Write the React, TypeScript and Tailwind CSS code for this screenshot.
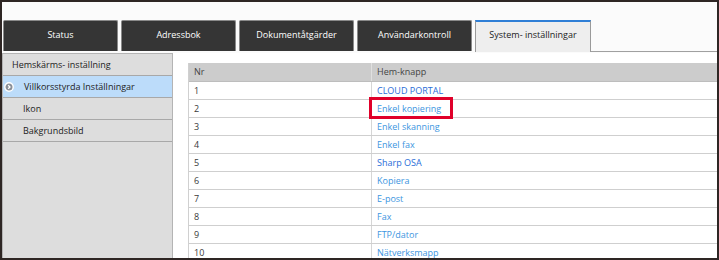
import React from "react";

const tabs = ["Status", "Adressbok", "Dokumentåtgärder", "Användarkontroll"];

const rows: { nr: string; name: string; dark?: boolean; mark?: boolean }[] = [
  { nr: "1", name: "CLOUD PORTAL", dark: true },
  { nr: "2", name: "Enkel kopiering", mark: true },
  { nr: "3", name: "Enkel skanning" },
  { nr: "4", name: "Enkel fax" },
  { nr: "5", name: "Sharp OSA", dark: true },
  { nr: "6", name: "Kopiera" },
  { nr: "7", name: "E-post" },
  { nr: "8", name: "Fax" },
  { nr: "9", name: "FTP/dator" },
  { nr: "10", name: "Nätverksmapp" },
];

function ArrowIcon() {
  return (
    <svg width="10" height="10" viewBox="0 0 10 10" className="shrink-0">
      <circle cx="5" cy="5" r="4.2" fill="#8a9099" stroke="#ffffff" strokeWidth="1.4" />
      <path d="M4.2 3.2 L6 5 L4.2 6.8" fill="none" stroke="#ffffff" strokeWidth="1.3" />
    </svg>
  );
}

export default function App() {
  return (
    <div className="w-[719px] h-[260px] overflow-hidden border-2 border-[#2e2624] bg-[#fbfbfb] flex flex-col font-['Open_Sans',sans-serif] text-[9px] text-[#333]">
      <div className="h-[18px] shrink-0" />
      <div className="flex h-[32px] shrink-0 pl-[1px] gap-[3px]">
        {tabs.map((t) => (
          <div
            key={t}
            className="w-[115px] h-[31px] bg-[#353535] rounded-t-[2px] border-t border-x border-[#8a8a8a] text-white flex justify-center pt-[7px]"
          >
            {t}
          </div>
        ))}
        <div className="w-[116px] h-[32px] bg-[#eeeeee] border-t-[2px] border-t-[#2f7fd6] border-x border-x-[#9a9a9a] text-[#222] flex justify-center pt-[6px]">
          System- inställningar
        </div>
        <div className="flex-1 border-b border-[#a0a0a0] -ml-[3px]" />
      </div>
      <div className="flex flex-1 min-h-0 pt-[1px]">
        <div className="w-[171px] shrink-0 bg-[#dddddd] border-t border-r border-l border-[#b4b4b4] flex flex-col">
          <div className="h-[22px] border-b border-[#a8a8a8] flex items-center pl-[9px] text-[#222]">
            Hemskärms- inställning
          </div>
          <div className="h-[22px] border-b border-[#a8a8a8] bg-[#bcdcfa] flex items-center pl-[1px] gap-[10px] text-[#222]">
            <ArrowIcon />
            <span>Villkorsstyrda Inställningar</span>
          </div>
          <div className="h-[22px] border-b border-[#a8a8a8] flex items-center pl-[20px] text-[#222]">
            Ikon
          </div>
          <div className="h-[22px] border-b border-[#a8a8a8] flex items-center pl-[20px] text-[#222]">
            Bakgrundsbild
          </div>
        </div>
        <div className="flex-1 bg-white pl-[15px] pt-[10px]">
          <div className="border-l border-[#d0d0d0]">
            <div className="flex h-[19px] bg-[#cccccc] border-b border-[#bdbdbd]">
              <div className="w-[183px] border-r border-[#e0e0e0] flex items-center pl-[5px] text-[#444]">Nr</div>
              <div className="flex-1 flex items-center pl-[5px] text-[#444]">Hem-knapp</div>
            </div>
            {rows.map((r) => (
              <div key={r.nr} className="flex h-[18px] border-b border-[#cfcfcf]">
                <div className="w-[183px] border-r border-[#d6d6d6] flex items-center pl-[5px] text-[#3a3a3a]">{r.nr}</div>
                <div className={`flex-1 flex items-center pl-[5px] ${r.dark ? "text-[#2a6dd8]" : "text-[#3c95e0]"}`}>
                  <span className="relative">
                    {r.name}
                    {r.mark && (
                      <span className="absolute -left-[8px] -right-[12px] -top-[5px] -bottom-[4px] border-[3px] border-[#e0002a]" />
                    )}
                  </span>
                </div>
              </div>
            ))}
          </div>
        </div>
      </div>
    </div>
  );
}
